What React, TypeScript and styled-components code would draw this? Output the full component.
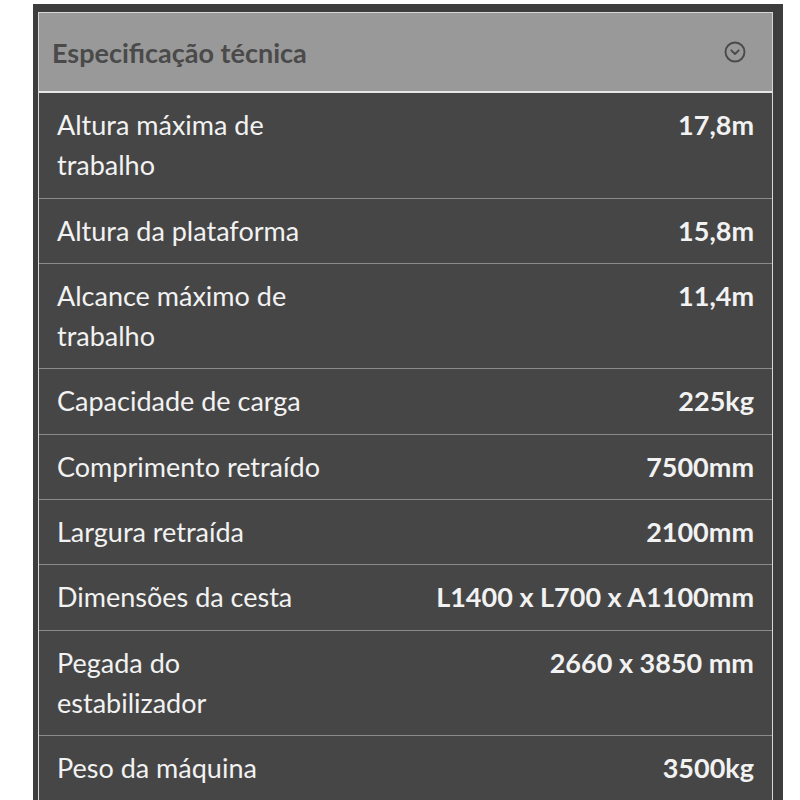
import * as React from 'react';
import styled, { createGlobalStyle } from 'styled-components';

const GlobalStyle = createGlobalStyle`
    html, body {
        margin: 0;
        padding: 0;
        background: #ffffff;
        font-family: Lato, "Open Sans", sans-serif;
    }
`

const Page = styled.div`
    width: 800px;
    height: 800px;
    overflow: hidden;
    padding: 4px 17px 0 33px;
    box-sizing: border-box;
`

const Frame = styled.section`
    background: #3d3d3d;
    padding: 8px 10px 0 5px;
    min-height: 900px;
`

const Panel = styled.div`
    border: 1px solid #d8d8d8;
    border-bottom: none;
    background: #464646;
`

const Header = styled.header`
    display: flex;
    align-items: center;
    justify-content: space-between;
    height: 78px;
    padding: 0 25px 0 13px;
    background: #999999;
    border-bottom: 2px solid #e6e6e6;
`

const Title = styled.h2`
    margin: 0;
    font-size: 27px;
    font-weight: 700;
    color: #4a4a4a;
`

const Row = styled.div`
    display: grid;
    grid-template-columns: 274px 1fr;
    column-gap: 20px;
    padding: 12px 18px 12px 18px;
    border-bottom: 1px solid #8a8a8a;
    font-size: 27px;
    line-height: 40.3px;
    color: #f2f2f2;
`

const Label = styled.span`
    font-weight: 400;
`

const Value = styled.span`
    font-weight: 700;
    text-align: right;
    white-space: nowrap;
`

const specs = [
    ['Altura máxima de trabalho', '17,8m'],
    ['Altura da plataforma', '15,8m'],
    ['Alcance máximo de trabalho', '11,4m'],
    ['Capacidade de carga', '225kg'],
    ['Comprimento retraído', '7500mm'],
    ['Largura retraída', '2100mm'],
    ['Dimensões da cesta', 'L1400 x L700 x A1100mm'],
    ['Pegada do estabilizador', '2660 x 3850 mm'],
    ['Peso da máquina', '3500kg'],
]

function ChevronCircle() {
    return (
        <svg width="24" height="24" viewBox="0 0 24 24" fill="none" stroke="#4a4a4a" strokeWidth="1.9" strokeLinecap="round" strokeLinejoin="round">
            <circle cx="12" cy="12" r="9.5" />
            <path d="M8.3 10.3 L12 14 L15.7 10.3" />
        </svg>
    )
}

function App() {
    return (
        <Page>
            <GlobalStyle />
            <Frame>
                <Panel>
                    <Header>
                        <Title>Especificação técnica</Title>
                        <ChevronCircle />
                    </Header>
                    {specs.map(([label, value]) => (
                        <Row key={label}>
                            <Label>{label}</Label>
                            <Value>{value}</Value>
                        </Row>
                    ))}
                </Panel>
            </Frame>
        </Page>
    )
}

export default App
